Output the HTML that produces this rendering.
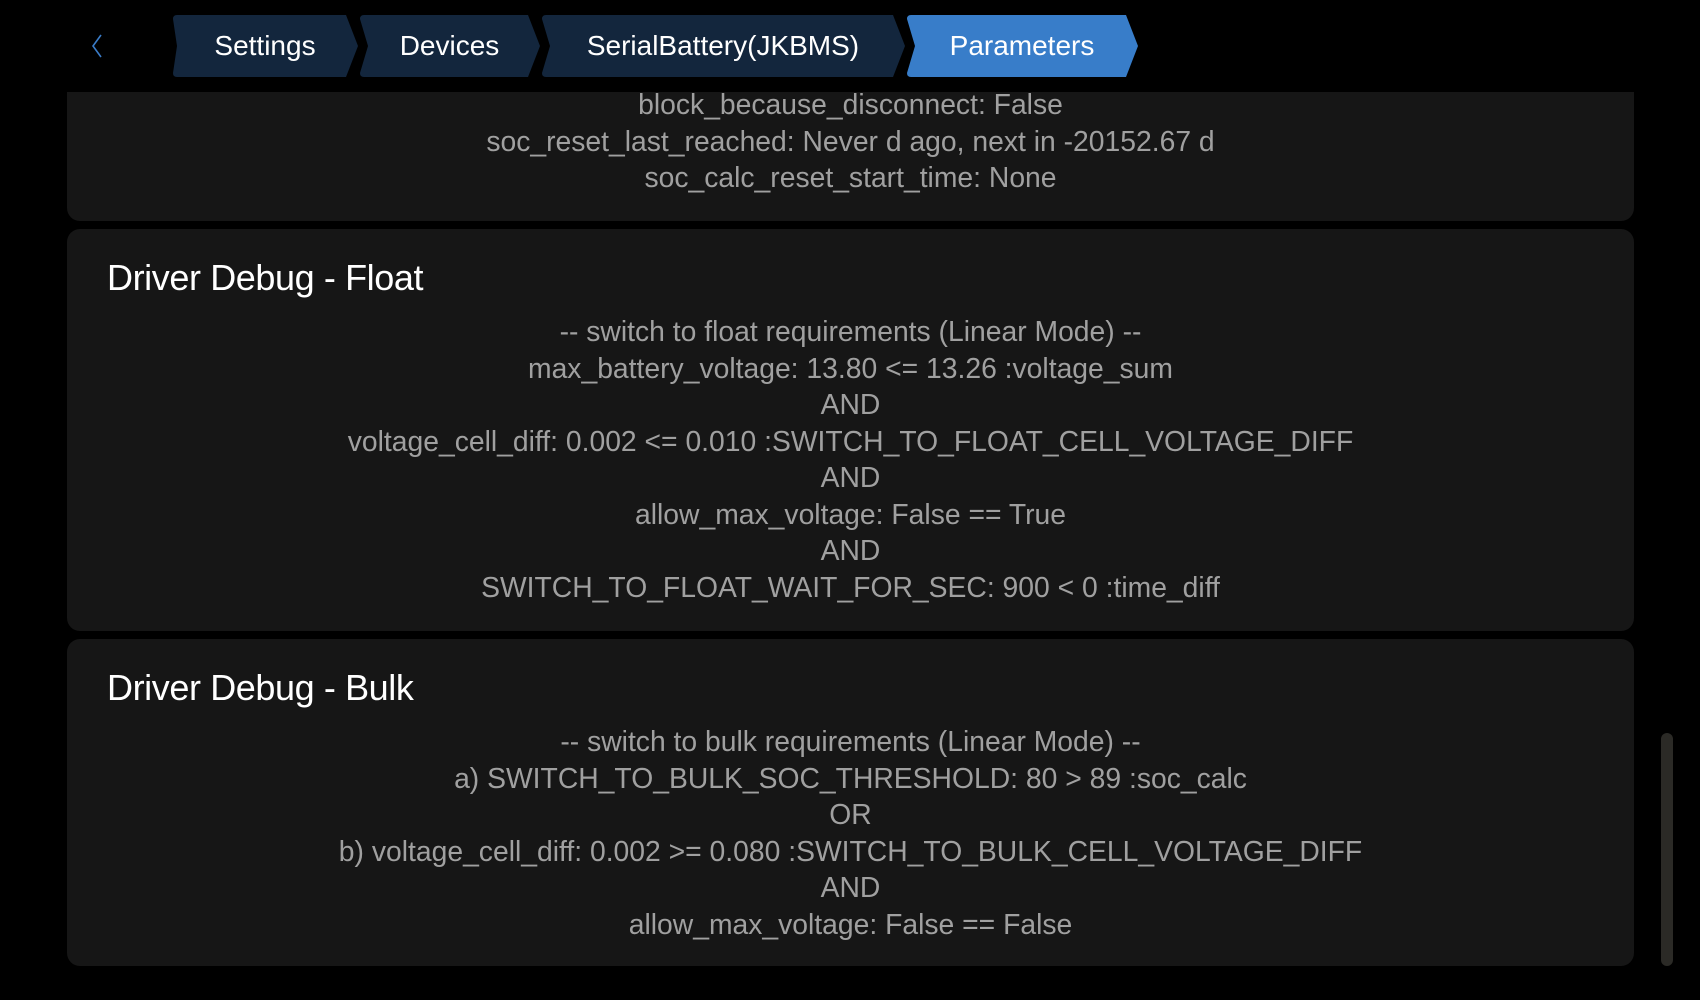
<!DOCTYPE html>
<html><head><meta charset="utf-8"><style>
html,body{margin:0;padding:0;background:#000;width:1700px;height:1000px;overflow:hidden;font-family:"Liberation Sans",sans-serif;}
.panel{position:absolute;left:67px;width:1567px;background:#161616;border-radius:13px;}
.title{position:absolute;left:40px;color:#fff;font-size:36px;letter-spacing:-0.4px;white-space:nowrap;}
.lines{position:absolute;left:0;right:0;text-align:center;color:#a0a0a0;font-size:28.3px;line-height:36.5px;letter-spacing:0px;white-space:nowrap;}
.hdr{position:absolute;left:0;top:0;width:1700px;height:92px;background:#000;}
.tab{position:absolute;top:15px;height:62px;color:#fff;font-size:28px;line-height:62px;text-align:center;}
.tab svg{position:absolute;left:0;top:0;}
.tab span{position:relative;}
.sb{position:absolute;left:1661px;top:733px;width:12px;height:233px;border-radius:6px;background:#2b2a26;}
</style></head><body>
<div class="panel" style="top:40px;height:181px;">
<div class="lines" style="top:46px;">block_because_disconnect: False<br>soc_reset_last_reached: Never d ago, next in -20152.67 d<br>soc_calc_reset_start_time: None</div>
</div>
<div class="panel" style="top:229px;height:402px;">
<div class="title" style="top:28px;">Driver Debug - Float</div>
<div class="lines" style="top:84px;">-- switch to float requirements (Linear Mode) --<br>max_battery_voltage: 13.80 &lt;= 13.26 :voltage_sum<br>AND<br>voltage_cell_diff: 0.002 &lt;= 0.010 :SWITCH_TO_FLOAT_CELL_VOLTAGE_DIFF<br>AND<br>allow_max_voltage: False == True<br>AND<br>SWITCH_TO_FLOAT_WAIT_FOR_SEC: 900 &lt; 0 :time_diff</div>
</div>
<div class="panel" style="top:639px;height:327px;">
<div class="title" style="top:28px;">Driver Debug - Bulk</div>
<div class="lines" style="top:84px;">-- switch to bulk requirements (Linear Mode) --<br>a) SWITCH_TO_BULK_SOC_THRESHOLD: 80 &gt; 89 :soc_calc<br>OR<br>b) voltage_cell_diff: 0.002 &gt;= 0.080 :SWITCH_TO_BULK_CELL_VOLTAGE_DIFF<br>AND<br>allow_max_voltage: False == False</div>
</div>
<div class="sb"></div>
<div class="hdr">
<svg style="position:absolute;left:90px;top:33px" width="16" height="26"><path d="M11 2 L3 13 L11 24" stroke="#3a7cc8" stroke-width="1.6" fill="none"/></svg>
<div class="tab" style="left:171px;width:188px;"><svg width="188" height="62"><path d="M6 0 H175 L187 31 L175 62 H6 Q2 62 2 58 L6 31 L2 4 Q2 0 6 0Z" fill="#13263d"/></svg><span>Settings</span></div>
<div class="tab" style="left:358px;width:183px;"><svg width="183" height="62"><path d="M6 0 H170 L182 31 L170 62 H6 Q2 62 2 58 L10 31 L2 4 Q2 0 6 0Z" fill="#13263d"/></svg><span>Devices</span></div>
<div class="tab" style="left:540px;width:366px;"><svg width="366" height="62"><path d="M6 0 H353 L365 31 L353 62 H6 Q2 62 2 58 L10 31 L2 4 Q2 0 6 0Z" fill="#13263d"/></svg><span>SerialBattery(JKBMS)</span></div>
<div class="tab" style="left:905px;width:234px;"><svg width="234" height="62"><path d="M6 0 H221 L233 31 L221 62 H6 Q2 62 2 58 L10 31 L2 4 Q2 0 6 0Z" fill="#387dc9"/></svg><span>Parameters</span></div>
</div>
</body></html>
